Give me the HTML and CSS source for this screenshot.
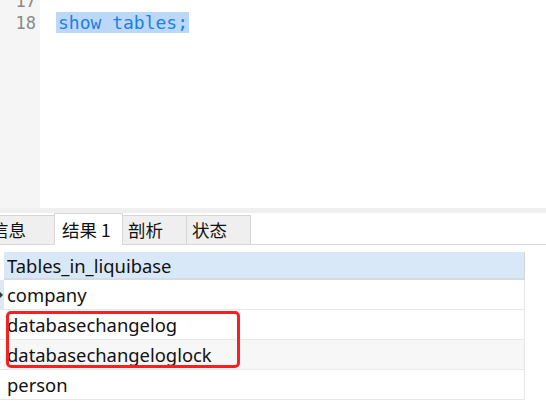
FILE: index.html
```html
<!DOCTYPE html>
<html>
<head>
<meta charset="utf-8">
<link rel="stylesheet" href="styles.css">
</head>
<body>
<div class="editor">
  <div class="gutter">
    <div class="ln">17</div>
    <div class="ln">18</div>
  </div>
  <div class="code">
    <div class="line"></div>
    <div class="line"><span class="sel">show tables;</span></div>
  </div>
</div>
<div class="split"></div>
<div class="tabs">
  <div class="tab first">信息</div>
  <div class="tab active">结果 1</div>
  <div class="tab">剖析</div>
  <div class="tab">状态</div>
  <div class="tabfill"></div>
</div>
<div class="grid">
  <div class="row head"><div class="ind"></div><div class="cell">Tables_in_liquibase</div></div>
  <div class="row cur"><div class="ind"><span class="arrow"></span></div><div class="cell">company</div></div>
  <div class="row"><div class="ind"></div><div class="cell">databasechangelog</div></div>
  <div class="row alt"><div class="ind"></div><div class="cell">databasechangeloglock</div></div>
  <div class="row"><div class="ind"></div><div class="cell">person</div></div>
  <div class="mark"></div>
</div>
</body>
</html>
```
FILE: styles.css
```css
* { box-sizing: border-box; }
html, body { margin: 0; padding: 0; background: #fff; width: 546px; height: 408px; overflow: hidden; }
body { font-family: "Noto Sans", "Noto Sans CJK SC", sans-serif; color: #111; }

.editor { display: flex; height: 208px; }
.gutter { width: 40px; background: #f5f5f5; margin-top: -10px; padding-right: 4px; }
.ln { height: 22px; line-height: 22px; text-align: right; font-family: "DejaVu Sans Mono", monospace; font-size: 17px; color: #8a8a8a; }
.code { flex: 1; margin-top: -10px; padding-left: 16px; }
.line { height: 22px; line-height: 22px; font-family: "DejaVu Sans Mono", monospace; font-size: 18px; white-space: pre; }
.sel { background: #bcd8f8; color: #1e7fe6; display: inline-block; height: 21px; line-height: 21px; padding: 0 1px 0 2px; }

.split { height: 5px; background: #efefef; }

.tabs { display: flex; align-items: flex-end; height: 32px; border-bottom: 1px solid #d8d8d8; }
.tab { height: 29px; width: 65px; background: #efefef; border: 1px solid #d6d6d6; border-bottom: none; margin-left: -1px; font-family: "Noto Sans CJK SC", sans-serif; font-size: 17.5px; line-height: 28px; padding-left: 5px; color: #111; }
.tab.first { width: 57px; margin-left: -2px; padding-left: 0; text-indent: -8px; }
.tab.active { background: #fff; height: 32px; width: 69px; line-height: 32px; padding-left: 7px; margin-bottom: -1px; border-color: #d8d8d8; }
.tabfill { flex: 1; }

.grid { position: relative; margin-top: 7px; width: 525px; }
.row { display: flex; height: 30px; }
.ind { width: 4px; background: #fff; border-bottom: 1px solid #e6e6e6; position: relative; }
.cell { flex: 1; font-size: 18.4px; line-height: 29px; padding-left: 3px; border-bottom: 1px solid #e8e8e8; border-right: 1px solid #e6e6e6; white-space: nowrap; }
.row.head { height: 28px; }
.row.head .cell { background: #d8e8f7; line-height: 27px; border-bottom: 2px solid #d4dbe2; border-right: 1px solid #cfd6dc; }
.row.head .ind { background: #fff; border-bottom: none; }
.row.cur .ind { background: #dce8f4; }
.arrow { position: absolute; left: 0; top: 12px; width: 0; height: 0; border-left: 3px solid #333; border-top: 3px solid transparent; border-bottom: 3px solid transparent; }
.row.alt .cell { background: #f7f7f7; }

.mark { position: absolute; left: 6px; top: 59px; width: 234px; height: 57px; border: 3px solid #fb2020; border-radius: 5px; }
```
